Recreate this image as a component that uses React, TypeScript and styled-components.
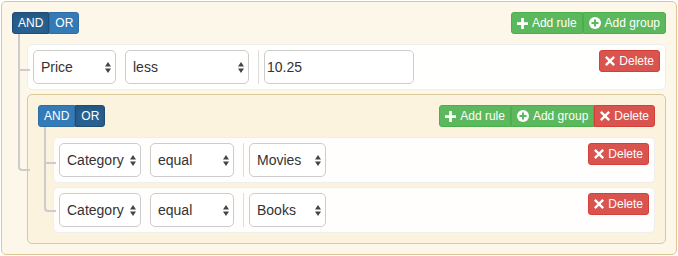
import React from 'react';
import styled, { createGlobalStyle, css } from 'styled-components';

type Variant = 'primary' | 'success' | 'danger';

const PALETTE: Record<Variant, { bg: string; border: string; activeBg: string; activeBorder: string }> = {
  primary: { bg: '#337ab7', border: '#2e6da4', activeBg: '#286090', activeBorder: '#204d74' },
  success: { bg: '#5cb85c', border: '#4cae4c', activeBg: '#449d44', activeBorder: '#398439' },
  danger: { bg: '#d9534f', border: '#d43f3a', activeBg: '#c9302c', activeBorder: '#ac2925' }
};

const GlobalStyle = createGlobalStyle`
  html, body {
    margin: 0;
    padding: 0;
    background: #fff;
  }

  body {
    font-family: "Liberation Sans", Arial, Helvetica, sans-serif;
    font-size: 14px;
    color: #333;
  }

  * {
    box-sizing: border-box;
  }
`;

const Builder = styled.div`
  margin: 1px;
`;

const Group = styled.div`
  padding: 10px 10px 6px;
  border: 1px solid #dcc896;
  border-radius: 5px;
  background: rgba(250, 240, 210, 0.5);
`;

const GroupHeader = styled.div`
  display: flex;
  justify-content: space-between;
  align-items: flex-start;
  margin-bottom: 10px;
`;

const BtnGroup = styled.div`
  display: inline-flex;

  & > * + * {
    margin-left: -1px;
  }

  & > *:not(:first-child) {
    border-top-left-radius: 0;
    border-bottom-left-radius: 0;
  }

  & > *:not(:last-child) {
    border-top-right-radius: 0;
    border-bottom-right-radius: 0;
  }
`;

const Btn = styled.button<{ $variant: Variant; $active?: boolean }>`
  position: relative;
  display: inline-flex;
  align-items: center;
  gap: 4px;
  height: 22px;
  margin: 0;
  padding: 1px 5px;
  font: 12px/18px "Liberation Sans", Arial, Helvetica, sans-serif;
  color: #fff;
  white-space: nowrap;
  cursor: pointer;
  border-radius: 3px;
  background: ${({ $variant }) => PALETTE[$variant].bg};
  border: 1px solid ${({ $variant }) => PALETTE[$variant].border};

  ${({ $active, $variant }) => $active && css`
    z-index: 1;
    background: ${PALETTE[$variant].activeBg};
    border-color: ${PALETTE[$variant].activeBorder};
    box-shadow: inset 0 3px 5px rgba(0, 0, 0, 0.125);
  `}

  svg {
    flex: none;
  }
`;

const RulesList = styled.div`
  display: flex;
  flex-direction: column;
  gap: 4px;
  padding: 0 0 4px 15px;

  & > * {
    position: relative;
  }

  & > *::before,
  & > *::after {
    content: '';
    position: absolute;
    left: -10px;
    width: 10px;
    height: calc(50% + 4px);
    border-color: #ccc;
    border-style: solid;
  }

  & > *::before {
    top: -4px;
    border-width: 0 0 2px 2px;
  }

  & > *::after {
    top: 50%;
    border-width: 0 0 0 2px;
  }

  & > *:first-child::before {
    top: -11px;
    height: calc(50% + 13px);
  }

  & > *:last-child::before {
    border-radius: 0 0 0 4px;
  }

  & > *:last-child::after {
    display: none;
  }
`;

const RuleBox = styled.div`
  display: flex;
  align-items: flex-start;
  padding: 5px;
  border: 1px solid #eee;
  border-radius: 5px;
  background: rgba(255, 255, 255, 0.9);
`;

const Fields = styled.div`
  display: flex;
  align-items: center;
  gap: 9px;
`;

const ValueCell = styled.div`
  display: flex;
  align-items: center;
  padding-left: 5px;
  border-left: 1px solid #ddd;
`;

const RuleActions = styled.div`
  margin-left: auto;
`;

const SelectBox = styled.div<{ $w: number }>`
  display: flex;
  align-items: center;
  justify-content: space-between;
  width: ${({ $w }) => $w}px;
  height: 34px;
  padding: 0 4px 0 7px;
  border: 1px solid #ccc;
  border-radius: 5px;
  background: #fff;
  font-size: 14px;
  color: #333;
  white-space: nowrap;
`;

const TextInput = styled.input`
  width: 150px;
  height: 34px;
  margin: 0;
  padding: 0 2px;
  border: 1px solid #ccc;
  border-radius: 5px;
  background: #fff;
  font: 14px "Liberation Sans", Arial, Helvetica, sans-serif;
  color: #333;
  outline: none;
`;

const SelectArrows = () => (
  <svg width='6' height='11' viewBox='0 0 6 11'>
    <path d='M0 4.4 L3 0 L6 4.4 Z M0 6.6 L3 11 L6 6.6 Z' fill='#444' />
  </svg>
);

const PlusIcon = () => (
  <svg width='11' height='11' viewBox='0 0 12 12'>
    <path d='M4.5 0h3v4.5H12v3H7.5V12h-3V7.5H0v-3h4.5z' fill='#fff' />
  </svg>
);

const PlusSignIcon = () => (
  <svg width='12' height='12' viewBox='0 0 12 12'>
    <circle cx='6' cy='6' r='6' fill='#fff' />
    <path d='M5 2.5h2V5h2.5v2H7v2.5H5V7H2.5V5H5z' fill={PALETTE.success.bg} />
  </svg>
);

const RemoveIcon = () => (
  <svg width='10' height='10' viewBox='0 0 12 12'>
    <path d='M2 0L6 4L10 0L12 2L8 6L12 10L10 12L6 8L2 12L0 10L4 6L0 2Z' fill='#fff' />
  </svg>
);

const Select = ({ label, width }: { label: string; width: number }) => (
  <SelectBox $w={width}>
    <span>{label}</span>
    <SelectArrows />
  </SelectBox>
);

const DeleteBtn = () => (
  <Btn $variant='danger'>
    <RemoveIcon />
    Delete
  </Btn>
);

const Conditions = ({ value }: { value: 'AND' | 'OR' }) => (
  <BtnGroup>
    <Btn $variant='primary' $active={value === 'AND'}>AND</Btn>
    <Btn $variant='primary' $active={value === 'OR'}>OR</Btn>
  </BtnGroup>
);

const GroupActions = ({ withDelete }: { withDelete?: boolean }) => (
  <BtnGroup>
    <Btn $variant='success'>
      <PlusIcon />
      Add rule
    </Btn>
    <Btn $variant='success'>
      <PlusSignIcon />
      Add group
    </Btn>
    {withDelete && <DeleteBtn />}
  </BtnGroup>
);

interface RuleProps {
  field: string;
  fieldWidth: number;
  operator: string;
  operatorWidth: number;
  children: React.ReactNode;
}

const Rule = ({ field, fieldWidth, operator, operatorWidth, children }: RuleProps) => (
  <RuleBox>
    <Fields>
      <Select label={field} width={fieldWidth} />
      <Select label={operator} width={operatorWidth} />
      <ValueCell>{children}</ValueCell>
    </Fields>
    <RuleActions>
      <DeleteBtn />
    </RuleActions>
  </RuleBox>
);

export default function App () {
  return (
    <>
      <GlobalStyle />
      <Builder>
        <Group>
          <GroupHeader>
            <Conditions value='AND' />
            <GroupActions />
          </GroupHeader>
          <RulesList>
            <Rule field='Price' fieldWidth={83} operator='less' operatorWidth={124}>
              <TextInput defaultValue='10.25' />
            </Rule>
            <Group>
              <GroupHeader>
                <Conditions value='OR' />
                <GroupActions withDelete />
              </GroupHeader>
              <RulesList>
                <Rule field='Category' fieldWidth={82} operator='equal' operatorWidth={84}>
                  <Select label='Movies' width={77} />
                </Rule>
                <Rule field='Category' fieldWidth={82} operator='equal' operatorWidth={84}>
                  <Select label='Books' width={77} />
                </Rule>
              </RulesList>
            </Group>
          </RulesList>
        </Group>
      </Builder>
    </>
  );
}
